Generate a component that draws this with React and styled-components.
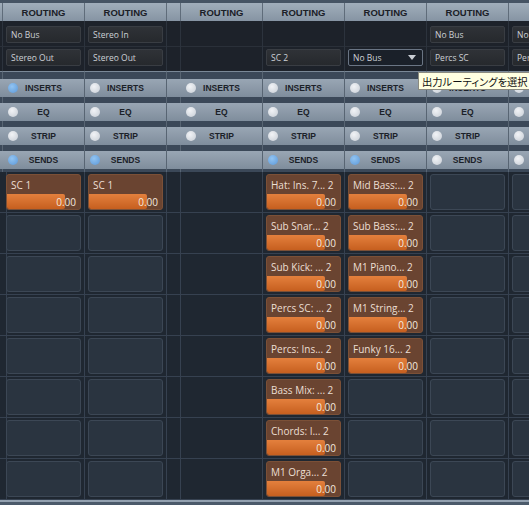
import React from "react";
import styled, { createGlobalStyle, css } from "styled-components";

const Global = createGlobalStyle`
  html, body { margin: 0; padding: 0; background: #1f2731; overflow: hidden; }
  #root { width: 529px; height: 505px; overflow: hidden; position: relative; }
`;

const Page = styled.div`
  position: relative;
  width: 529px;
  height: 505px;
  overflow: hidden;
  display: flex;
  flex-direction: column;
  background: #1f2731;
  border-top: 3px solid #465464;
  box-sizing: border-box;
`;

const Strip = styled.div`
  display: flex;
  flex-direction: row;
  align-items: stretch;
`;

const Column = styled.div`
  flex: none;
  width: ${(p) => p.$w}px;
  display: flex;
  flex-direction: column;
`;

const Header = styled.div`
  height: 18px;
  background: linear-gradient(#a1aebb, #8694a3);
  border-right: 1px solid #5f6c7a;
  display: flex;
  align-items: center;
  justify-content: center;
  font-family: "Liberation Sans", Arial, sans-serif;
  font-weight: bold;
  font-size: 9.5px;
  color: #1b2027;
  white-space: nowrap;
  overflow: hidden;
`;

const Routing = styled.div`
  background: #1d222a;
  border-right: 1px solid #2c333d;
  display: flex;
  flex-direction: column;
`;

const RoutingRow = styled.div`
  box-sizing: border-box;
  height: ${(p) => (p.$first ? 26 : 24)}px;
  padding: ${(p) => (p.$first ? "5px 3px 0" : "2px 3px 0")};
  border-bottom: ${(p) => (p.$first ? "1px solid #2a3039" : "none")};
`;

const Field = styled.div`
  box-sizing: border-box;
  height: 17px;
  width: 75px;
  border-radius: 2px;
  border: 1px solid ${(p) => (p.$active ? "#6a7584" : "#393d43")};
  background: ${(p) =>
    p.$active ? "#1a2029" : "linear-gradient(#2f3237, #26292d)"};
  display: flex;
  align-items: center;
  justify-content: space-between;
  padding: 0 6px 0 4px;
  font-family: "Open Sans", "Liberation Sans", sans-serif;
  font-size: 8.5px;
  color: #cdd1d6;
  white-space: nowrap;
  overflow: hidden;
`;

const Arrow = styled.span`
  width: 0;
  height: 0;
  border-left: 4.5px solid transparent;
  border-right: 4.5px solid transparent;
  border-top: 5px solid #c9ced5;
`;

const Buttons = styled.div`
  border-top: 1px solid #7a8897;
  background: #3b4858;
  border-right: 1px solid #586573;
  padding: 7px 0 3px;
  display: flex;
  flex-direction: column;
  gap: 6px;
`;

const ToggleButton = styled.div`
  height: 18px;
  background: linear-gradient(#99a6b4, #7f8d9c);
  display: flex;
  align-items: center;
  font-family: "Liberation Sans", Arial, sans-serif;
  font-weight: bold;
  font-size: 8.5px;
  color: #1b2128;
  padding: 0 15px 0 5px;
  white-space: nowrap;
  overflow: hidden;
`;

const Led = styled.span`
  flex: none;
  width: 10px;
  height: 10px;
  border-radius: 50%;
  ${(p) =>
    p.$on
      ? css`
          background: radial-gradient(circle at 40% 35%, #92c4f2, #5c98d8);
        `
      : css`
          background: radial-gradient(circle at 40% 35%, #f1f3f6, #c7cdd5);
        `}
`;

const Label = styled.span`
  flex: 1;
  text-align: center;
`;

const Sends = styled.div`
  display: flex;
  flex-direction: column;
`;

const SendRow = styled.div`
  box-sizing: border-box;
  height: 41px;
  padding: 2px 3px 0;
  border-bottom: 1px solid #364150;
  border-right: 1px solid #364150;
`;

const EmptySlot = styled.div`
  box-sizing: border-box;
  width: 75px;
  height: 36px;
  border-radius: 3px;
  background: #2a3440;
  border: 1px solid #3c4755;
`;

const SendSlot = styled.div`
  box-sizing: border-box;
  width: 75px;
  height: 36px;
  border-radius: 3px;
  background: #6a4431;
  border: 1px solid #7b5037;
  display: flex;
  flex-direction: column;
  overflow: hidden;
  font-family: "Open Sans", "Liberation Sans", sans-serif;
  font-size: 10px;
`;

const SendName = styled.div`
  height: 19px;
  padding: 0 4px;
  display: flex;
  align-items: center;
  color: #ecdfd3;
  white-space: nowrap;
  overflow: hidden;
`;

const Bar = styled.div`
  position: relative;
  height: 15px;
  display: flex;
  align-items: center;
  justify-content: flex-end;
  padding-right: 4px;
  color: #f4e9df;
`;

const BarFill = styled.div`
  position: absolute;
  left: 0;
  top: 0;
  bottom: 0;
  background: linear-gradient(#e4803d, #c65f1f);
  border-radius: 0 2px 2px 2px;
`;

const BarValue = styled.span`
  position: relative;
`;

const BottomBar = styled.div`
  flex: 1;
  border-top: 2px solid #93a1b0;
  background: #4b5a6a;
`;

const Tooltip = styled.div`
  position: absolute;
  left: 418px;
  top: 69px;
  height: 18px;
  box-sizing: border-box;
  padding: 4px 4px 0 3px;
  background: #ffffe1;
  border: 1px solid #8a8a80;
  font-family: "Noto Sans CJK JP", "Noto Sans", sans-serif;
  font-size: 10.3px;
  line-height: 1;
  font-feature-settings: "palt";
  color: #111;
  white-space: nowrap;
`;

const channels = [
  { kind: "edge", w: 3 },
  {
    kind: "ch",
    r1: "No Bus",
    r2: "Stereo Out",
    leds: [true, false, false, true],
    sends: ["SC 1"],
  },
  {
    kind: "ch",
    r1: "Stereo In",
    r2: "Stereo Out",
    leds: [false, false, false, true],
    sends: ["SC 1"],
  },
  { kind: "spacer", w: 14 },
  {
    kind: "ch",
    leds: [false, false, false, null],
    noSlots: true,
    sends: [],
  },
  {
    kind: "ch",
    r2: "SC 2",
    leds: [false, false, false, true],
    sends: [
      "Hat: Ins. 7... 2",
      "Sub Snar... 2",
      "Sub Kick: ... 2",
      "Percs SC: ... 2",
      "Percs: Ins... 2",
      "Bass Mix: ... 2",
      "Chords: I... 2",
      "M1 Orga... 2",
    ],
  },
  {
    kind: "ch",
    r2: "No Bus",
    r2Active: true,
    leds: [false, false, false, true],
    sends: [
      "Mid Bass:... 2",
      "Sub Bass:... 2",
      "M1 Piano... 2",
      "M1 String... 2",
      "Funky 16... 2",
    ],
  },
  {
    kind: "ch",
    r1: "No Bus",
    r2: "Percs SC",
    leds: [false, false, false, false],
    sends: [],
  },
  {
    kind: "ch",
    r1: "No Bus",
    r2: "Percs SC",
    leds: [false, false, false, false],
    sends: [],
    noHeaderText: true,
  },
];

const labels = ["INSERTS", "EQ", "STRIP", "SENDS"];
const ROWS = 8;

function Channel({ c }) {
  const plain = c.kind !== "ch";
  const w = plain ? c.w : 82;
  return (
    <Column $w={w}>
      <Header>{plain || c.noHeaderText ? "" : "ROUTING"}</Header>
      <Routing>
        <RoutingRow $first>{c.r1 && <Field>{c.r1}</Field>}</RoutingRow>
        <RoutingRow>
          {c.r2 && (
            <Field $active={c.r2Active}>
              <span>{c.r2}</span>
              {c.r2Active && <Arrow />}
            </Field>
          )}
        </RoutingRow>
      </Routing>
      <Buttons>
        {labels.map((l, i) => (
          <ToggleButton key={l}>
            {!plain && c.leds[i] !== null && (
              <>
                <Led $on={c.leds[i]} />
                <Label>{l}</Label>
              </>
            )}
          </ToggleButton>
        ))}
      </Buttons>
      <Sends>
        {Array.from({ length: ROWS }).map((_, i) => (
          <SendRow key={i}>
            {plain || c.noSlots ? null : c.sends[i] ? (
              <SendSlot>
                <SendName>{c.sends[i]}</SendName>
                <Bar>
                  <BarFill style={{ width: "79%" }} />
                  <BarValue>0.00</BarValue>
                </Bar>
              </SendSlot>
            ) : (
              <EmptySlot />
            )}
          </SendRow>
        ))}
      </Sends>
    </Column>
  );
}

export default function App() {
  return (
    <>
      <Global />
      <Page>
        <Strip>
          {channels.map((c, i) => (
            <Channel key={i} c={c} />
          ))}
        </Strip>
        <BottomBar />
        <Tooltip>出力ルーティングを選択</Tooltip>
      </Page>
    </>
  );
}
